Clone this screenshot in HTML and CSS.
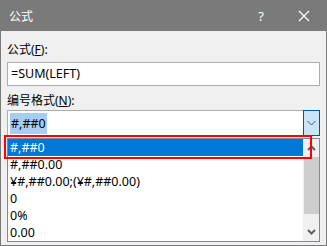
FILE: index.html
```html
<!DOCTYPE html>
<html>
<head>
    <meta charset="utf-8">
    <title>公式</title>
    <link rel="stylesheet" href="styles.css">
</head>
<body>
    <div class="window">
        <div class="titlebar">
            <span class="title">公式</span>
            <span class="help">?</span>
            <svg class="close" width="12" height="12" viewBox="0 0 12 12">
                <path d="M1 1 L11 11 M11 1 L1 11" stroke="#fff" stroke-width="1.2" fill="none"/>
            </svg>
        </div>

        <div class="content">
            <label class="label">公式(<u>F</u>):</label>
            <div class="input">=SUM(LEFT)</div>

            <label class="label label-second">编号格式(<u>N</u>):</label>
            <div class="combo">
                <span class="combo-text"><span class="sel">#,##0</span></span>
                <span class="combo-btn">
                    <svg width="9" height="6" viewBox="0 0 9 6">
                        <path d="M0.5 1 L4.5 5 L8.5 1" stroke="#555" stroke-width="1" fill="none"/>
                    </svg>
                </span>
            </div>

            <div class="list-wrap">
                <div class="list">
                    <div class="items">
                        <div class="item active">#,##0</div>
                        <div class="item">#,##0.00</div>
                        <div class="item">¥#,##0.00;(¥#,##0.00)</div>
                        <div class="item">0</div>
                        <div class="item">0%</div>
                        <div class="item">0.00</div>
                    </div>
                    <div class="scrollbar">
                        <svg class="arrow" width="9" height="6" viewBox="0 0 9 6">
                            <path d="M1 5 L4.5 1.5 L8 5" stroke="#606060" stroke-width="2" fill="none"/>
                        </svg>
                        <div class="thumb"></div>
                        <div class="track"></div>
                        <svg class="arrow" width="9" height="6" viewBox="0 0 9 6">
                            <path d="M1 1 L4.5 4.5 L8 1" stroke="#606060" stroke-width="2" fill="none"/>
                        </svg>
                    </div>
                </div>
                <div class="highlight-box"></div>
            </div>
        </div>
    </div>
</body>
</html>
```

FILE: styles.css
```css
html, body {
    margin: 0;
    padding: 0;
}
body {
    font-family: "Noto Sans", "Noto Sans CJK SC", sans-serif;
    font-size: 12px;
    color: #000;
    background: #f0f0f0;
}
.window {
    width: 327px;
    height: 246px;
    box-sizing: border-box;
    background: #f0f0f0;
    border: 1px solid #7a7a7a;
    border-top: none;
    overflow: hidden;
}
.titlebar {
    height: 31px;
    background: #7a7a7a;
    color: #fff;
    display: flex;
    align-items: center;
    padding-left: 8px;
    font-size: 12px;
}
.title {
    flex: 1;
}
.help {
    width: 16px;
    text-align: center;
    font-size: 13px;
    margin-right: 29px;
}
.close {
    margin-right: 16px;
}
.content {
    padding: 11px 6px 0 6px;
    display: flex;
    flex-direction: column;
}
.label {
    display: block;
    height: 16px;
    line-height: 16px;
}
.label-second {
    margin-top: 7px;
}
.input {
    margin-top: 4px;
    height: 24px;
    box-sizing: border-box;
    border: 1px solid #adadad;
    background: #fff;
    line-height: 22px;
    padding-left: 3px;
    font-size: 12.5px;
}
.combo {
    margin-top: 1px;
    height: 26px;
    box-sizing: border-box;
    border: 1px solid #adadad;
    background: #fff;
    display: flex;
    align-items: center;
    font-size: 12.5px;
}
.combo-text {
    flex: 1;
    padding-left: 2px;
}
.sel {
    background: #a6cdf2;
    padding: 2px 1px;
}
.combo-btn {
    width: 17px;
    height: 26px;
    box-sizing: border-box;
    margin: -1px -1px -1px 0;
    background: #cce4f7;
    border: 1px solid #005499;
    display: flex;
    align-items: center;
    justify-content: center;
}
.list-wrap {
    position: relative;
    margin-top: 2px;
}
.list {
    height: 104px;
    box-sizing: border-box;
    border: 1px solid #828790;
    background: #fff;
    display: flex;
    overflow: hidden;
    font-size: 12.5px;
}
.items {
    flex: 1;
}
.item {
    height: 17px;
    line-height: 17px;
    padding-left: 2px;
    white-space: nowrap;
}
.item.active {
    background: #0078d7;
    color: #fff;
}
.scrollbar {
    width: 16px;
    background: #f0f0f0;
    display: flex;
    flex-direction: column;
    align-items: center;
}
.arrow {
    margin: 6px 0;
}
.thumb {
    width: 15px;
    height: 57px;
    background: #cdcdcd;
}
.track {
    flex: 1;
}
.highlight-box {
    position: absolute;
    left: -3px;
    top: -3px;
    width: 308px;
    height: 24px;
    box-sizing: border-box;
    border: 2px solid #ff0000;
}
```
